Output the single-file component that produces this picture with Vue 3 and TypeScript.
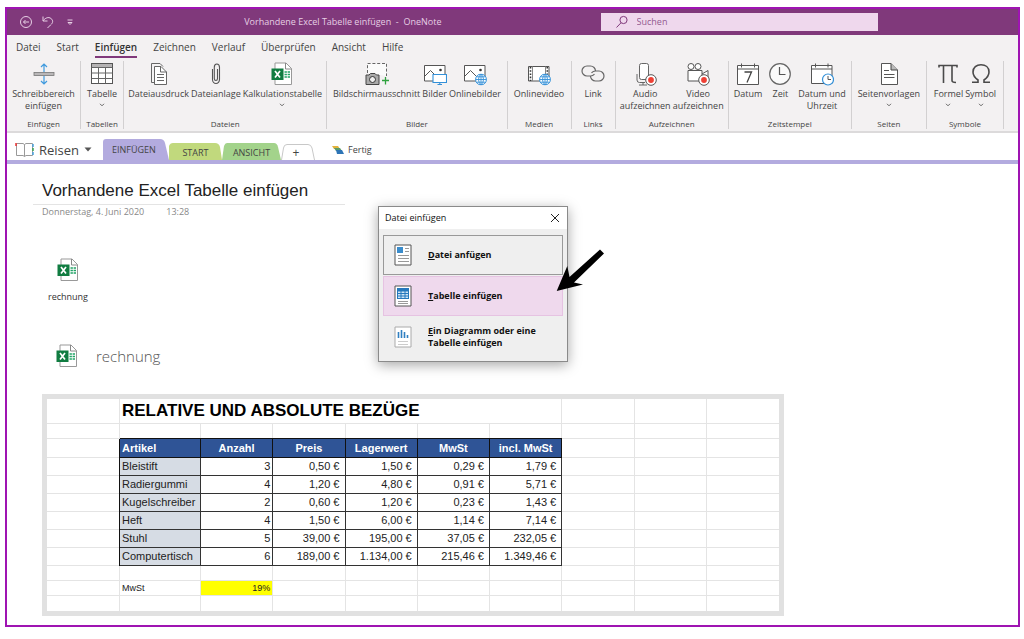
<script setup lang="ts">
import { ref } from 'vue'

interface Tool {
  icon: string
  lines: string[]
  menu?: boolean
}
interface Group {
  name: string
  spread?: boolean
  tools: Tool[]
}

const menus = ['Datei', 'Start', 'Einfügen', 'Zeichnen', 'Verlauf', 'Überprüfen', 'Ansicht', 'Hilfe']
const activeMenu = ref('Einfügen')
const query = ref('')

const groups: Group[] = [
  { name: 'Einfügen', tools: [{ icon: 'space', lines: ['Schreibbereich', 'einfügen'] }] },
  { name: 'Tabellen', tools: [{ icon: 'table', lines: ['Tabelle'], menu: true }] },
  {
    name: 'Dateien',
    tools: [
      { icon: 'printout', lines: ['Dateiausdruck'] },
      { icon: 'clip', lines: ['Dateianlage'] },
      { icon: 'excel', lines: ['Kalkulationstabelle'], menu: true },
    ],
  },
  {
    name: 'Bilder',
    tools: [
      { icon: 'screenshot', lines: ['Bildschirmausschnitt'] },
      { icon: 'picture', lines: ['Bilder'] },
      { icon: 'webpicture', lines: ['Onlinebilder'] },
    ],
  },
  { name: 'Medien', tools: [{ icon: 'webvideo', lines: ['Onlinevideo'] }] },
  { name: 'Links', tools: [{ icon: 'link', lines: ['Link'] }] },
  {
    name: 'Aufzeichnen',
    tools: [
      { icon: 'audio', lines: ['Audio', 'aufzeichnen'] },
      { icon: 'video', lines: ['Video', 'aufzeichnen'] },
    ],
  },
  {
    name: 'Zeitstempel',
    spread: true,
    tools: [
      { icon: 'date', lines: ['Datum'] },
      { icon: 'clock', lines: ['Zeit'] },
      { icon: 'datetime', lines: ['Datum und', 'Uhrzeit'] },
    ],
  },
  { name: 'Seiten', tools: [{ icon: 'template', lines: ['Seitenvorlagen'], menu: true }] },
  {
    name: 'Symbole',
    tools: [
      { icon: 'pi', lines: ['Formel'], menu: true },
      { icon: 'omega', lines: ['Symbol'], menu: true },
    ],
  },
]

const columns = ['Artikel', 'Anzahl', 'Preis', 'Lagerwert', 'MwSt', 'incl. MwSt']
const rows = [
  ['Bleistift', '3', '0,50 €', '1,50 €', '0,29 €', '1,79 €'],
  ['Radiergummi', '4', '1,20 €', '4,80 €', '0,91 €', '5,71 €'],
  ['Kugelschreiber', '2', '0,60 €', '1,20 €', '0,23 €', '1,43 €'],
  ['Heft', '4', '1,50 €', '6,00 €', '1,14 €', '7,14 €'],
  ['Stuhl', '5', '39,00 €', '195,00 €', '37,05 €', '232,05 €'],
  ['Computertisch', '6', '189,00 €', '1.134,00 €', '215,46 €', '1.349,46 €'],
]
</script>

<template>
  <svg class="sprite" aria-hidden="true">
    <symbol id="i-globe" viewBox="0 0 12 12">
      <circle cx="6" cy="6" r="5.4" fill="#fff" stroke="#3390d8" />
      <path d="M.6 6H11.4M1.6 3.3H10.4M1.6 8.7H10.4M6 .6V11.4M6 .6C2.8 3.5 2.8 8.5 6 11.4M6 .6C9.2 3.5 9.2 8.5 6 11.4" fill="none" stroke="#3390d8" stroke-width=".9" />
    </symbol>
    <symbol id="i-space" viewBox="0 0 24 24">
      <rect x="2" y="10.5" width="20" height="3" fill="#b9b7b8" stroke="#777" stroke-width=".8" />
      <path d="M12 10V2M9 5l3-3 3 3M12 14v8M9 19l3 3 3-3" fill="none" stroke="#3f9ade" stroke-width="1.2" />
    </symbol>
    <symbol id="i-table" viewBox="0 0 24 24">
      <rect x="1.500" y="1.500" width="21" height="20" fill="#fff" stroke="#555" />
      <rect x="2" y="2" width="20" height="3" fill="#b5b3b4" />
      <path d="M1.500 5.500H22.500M1.500 11H22.500M1.500 16.500H22.500M8.500 5V21.500M15.500 5V21.500" stroke="#666" fill="none" />
    </symbol>
    <symbol id="i-printout" viewBox="0 0 24 24">
      <path d="M4.500 1.500H13L16 4.500M4.500 1.500V20.500H7.500" fill="#f6f5f5" stroke="#666" />
      <path d="M7.500 4.500H14L19.500 10V22.500H7.500Z" fill="#fff" stroke="#666" />
      <path d="M13.500 4.500V10H19.500M10 12.500H17M10 15.500H17M10 18.500H17" fill="none" stroke="#666" />
    </symbol>
    <symbol id="i-clip" viewBox="0 0 24 24">
      <path d="M8.500 7V17.500a3.500 4 0 0 0 7 0V5.200a2.600 3.200 0 0 0-5.200 0V16.500a1.600 2 0 0 0 3.200 0V7" fill="none" stroke="#555" stroke-width="1.100" />
    </symbol>
    <symbol id="i-excel" viewBox="0 0 24 24">
      <path d="M5 1H16L21.500 6.500V22.500H5Z" fill="#fff" stroke="#999" />
      <path d="M15.500 1V7H21.500" fill="none" stroke="#888" />
      <path d="M14.500 10H20M14.500 12.500H20M14.500 15H20" stroke="#21a366" stroke-width="1.600" stroke-dasharray="2.400 .7" />
      <rect x="1.500" y="6.500" width="12" height="11.500" fill="#107c41" />
      <path d="M5 9L10 15.500M10 9L5 15.500" stroke="#fff" stroke-width="1.700" />
    </symbol>
    <symbol id="i-screenshot" viewBox="0 0 24 24">
      <path d="M2.500 11V1.500H21.500V14" fill="#fbfbfb" stroke="#666" stroke-dasharray="3 1.800" />
      <path d="M1 13H4L5.500 11.500H10L11.500 13H14V22.500H1Z" fill="#aaa" stroke="#444" />
      <circle cx="7.500" cy="17.500" r="3" fill="#eee" stroke="#333" />
      <path d="M17 18.500H24M20.500 15V22.500" stroke="#2fa23f" stroke-width="1.300" />
    </symbol>
    <symbol id="i-picture" viewBox="0 0 24 24">
      <path d="M1.500 3.500H22V19H1.500Z" fill="#fff" stroke="#555" />
      <path d="M2 14L7.500 8.500L13 14" fill="none" stroke="#555" />
      <circle cx="17.500" cy="8" r="1.300" fill="#333" />
      <path d="M10 12.500H23.500V20.500H10ZM14.500 22.500H19M16.800 20.500V22.500" fill="#fff" stroke="#3390d8" stroke-width="1.100" />
    </symbol>
    <symbol id="i-webpicture" viewBox="0 0 24 24">
      <path d="M1.500 3.500H22V19H1.500Z" fill="#fff" stroke="#555" />
      <path d="M2 14L7.500 8.500L14 15" fill="none" stroke="#555" />
      <circle cx="17.500" cy="8" r="1.300" fill="#333" />
      <use href="#i-globe" x="12" y="11.500" width="12" height="12" />
    </symbol>
    <symbol id="i-webvideo" viewBox="0 0 24 24">
      <path d="M1.500 4.500H22V19H1.500Z" fill="#fff" stroke="#555" />
      <path d="M5.500 4.500V19M18.500 4.500V19" stroke="#888" />
      <path d="M3.500 5V19M20.300 5V19" stroke="#333" stroke-width="1.600" stroke-dasharray="1.600 1.600" />
      <use href="#i-globe" x="12" y="11.500" width="12" height="12" />
    </symbol>
    <symbol id="i-link" viewBox="0 0 24 24">
      <path d="M13.500 12.200C12.500 13.300 11 14 9.500 14H6A5 5 0 0 1 6 4H9.500A5 5 0 0 1 14.500 9" fill="none" stroke="#666" stroke-width="1.200" />
      <path d="M10.500 10.800C11.500 9.700 13 9 14.500 9H18A5 5 0 0 1 18 19H14.500A5 5 0 0 1 9.500 14" fill="none" stroke="#666" stroke-width="1.200" />
    </symbol>
    <symbol id="i-rec" viewBox="0 0 12 12">
      <circle cx="6" cy="6" r="5.300" fill="#fff" stroke="#555" />
      <circle cx="6" cy="6" r="2.900" fill="#ee4035" />
    </symbol>
    <symbol id="i-audio" viewBox="0 0 24 24">
      <rect x="6.500" y="1.500" width="9" height="16" rx="2" fill="#fff" stroke="#666" />
      <path d="M4 12V18a2.500 2.500 0 0 0 2.500 2.500H12M10 20.500V23M6 23H14" fill="none" stroke="#666" />
      <use href="#i-rec" x="12" y="12" width="12" height="12" />
    </symbol>
    <symbol id="i-video" viewBox="0 0 24 24">
      <circle cx="5" cy="4.500" r="3" fill="#fff" stroke="#555" />
      <circle cx="12" cy="4.500" r="3" fill="#fff" stroke="#555" />
      <path d="M2 8.500H16V19H2ZM16 12L22 8.500V15" fill="#fff" stroke="#555" />
      <use href="#i-rec" x="12" y="12" width="12" height="12" />
    </symbol>
    <symbol id="i-date" viewBox="0 0 24 24">
      <path d="M1.500 3.500H22.500V22.500H1.500ZM1.500 7H22.500" fill="#fff" stroke="#555" />
      <path d="M5.500 1.500V5.500M18.500 1.500V5.500" stroke="#555" />
      <path d="M8.500 10H15.500L11 20.500" fill="none" stroke="#444" stroke-width="1.300" />
    </symbol>
    <symbol id="i-clock" viewBox="0 0 24 24">
      <circle cx="12" cy="12" r="10.300" fill="#fafafa" stroke="#666" stroke-width="1.200" />
      <path d="M11.500 5V12.500H17.500" fill="none" stroke="#555" stroke-width="1.200" />
    </symbol>
    <symbol id="i-datetime" viewBox="0 0 24 24">
      <path d="M1.500 3.500H22V21.500H1.500ZM1.500 7H22" fill="#fff" stroke="#555" />
      <path d="M5.500 1.500V5.500M18 1.500V5.500" stroke="#555" />
      <circle cx="18" cy="17.500" r="5.500" fill="#fff" stroke="#3390d8" stroke-width="1.200" />
      <path d="M18 14V17.500H21" fill="none" stroke="#555" />
    </symbol>
    <symbol id="i-template" viewBox="0 0 24 24">
      <path d="M4.500 1.500H14L20.500 8V22.500H4.500Z" fill="#fff" stroke="#555" />
      <path d="M14 1.500V8H20.500" fill="#bbb" stroke="#444" />
      <path d="M7 8.500H12M7 12.500H17.500M7 15.500H17.500" stroke="#555" />
    </symbol>
    <symbol id="i-pi" viewBox="0 0 24 24">
      <path d="M3 5.500V3.500H21V5.500M7.500 3.500V21M16 3.500V18.500Q16 20.500 20 20.500" fill="none" stroke="#4a4a4a" stroke-width="1.600" />
    </symbol>
    <symbol id="i-omega" viewBox="0 0 24 24">
      <path d="M3 20.300H9V18C5.500 15.500 4 13 4 10C4 5.500 7.500 2.800 12 2.800S20 5.500 20 10C20 13 18.500 15.500 15 18V20.300H21" fill="none" stroke="#4a4a4a" stroke-width="1.600" />
    </symbol>
  </svg>

  <div class="frame">
    <header class="titlebar">
      <div class="quick">
        <button type="button" aria-label="Zurück">
          <svg width="14" height="14" viewBox="0 0 14 14"><circle cx="7" cy="7" r="5.500" /><path d="M10 7H4.500M6.500 5L4.500 7l2 2" /></svg>
        </button>
        <button type="button" aria-label="Rückgängig">
          <svg width="14" height="14" viewBox="0 0 14 14"><path d="M2 1.500V6H6.500M2.200 5.800C4 3 7.500 1.500 10 3.500C12.500 5.500 12 8 9.500 10L6.500 13" /></svg>
        </button>
        <button type="button" aria-label="Symbolleiste anpassen">
          <svg width="14" height="14" viewBox="0 0 14 14"><path d="M4.500 5H9.500M5 7.500H9L7 9.500Z" /></svg>
        </button>
      </div>
      <span class="doc">Vorhandene Excel Tabelle einfügen &nbsp;-&nbsp; OneNote</span>
      <label class="search">
        <svg width="14" height="14" viewBox="0 0 14 14"><circle cx="8.500" cy="5" r="3.600" /><path d="M6 7.800L1.500 12.500" /></svg>
        <input v-model="query" type="text" placeholder="Suchen" aria-label="Suchen" />
      </label>
    </header>

    <nav class="menus">
      <button v-for="m in menus" :key="m" type="button" :class="{ active: m === activeMenu }" @click="activeMenu = m">{{ m }}</button>
    </nav>

    <section class="ribbon">
      <div v-for="g in groups" :key="g.name" class="group">
        <div class="tools" :class="{ spread: g.spread }">
          <button v-for="t in g.tools" :key="t.icon" type="button" class="tool">
            <svg class="icon"><use :href="'#i-' + t.icon" /></svg>
            <span v-for="l in t.lines" :key="l">{{ l }}</span>
            <svg v-if="t.menu" class="chev" viewBox="0 0 6 4"><path d="M1 .8L3 2.800L5 .8" /></svg>
          </button>
        </div>
        <div class="group-name">{{ g.name }}</div>
      </div>
    </section>

    <nav class="sections">
      <button type="button" class="notebook">
        <svg width="19" height="15" viewBox="0 0 19 15">
          <path d="M1.500 1.500H8L9.500 2.500L11 1.500H17.500V13.500H11L9.500 14.500L8 13.500H1.500ZM9.500 2.500V14.500" fill="#fff" stroke="#999" />
          <path d="M1 1V4" stroke="#e33" stroke-width="1.500" /><path d="M18 2V5" stroke="#4aa3df" stroke-width="1.500" /><path d="M18 6V9" stroke="#3aa655" stroke-width="1.500" /><path d="M18 10V13" stroke="#4aa3df" stroke-width="1.500" />
        </svg>
        <span>Reisen</span>
        <svg width="8" height="5" viewBox="0 0 8 5"><path d="M.5 .5H7.500L4 4.500Z" fill="#555" /></svg>
      </button>
      <button type="button" class="tab current">
        <svg viewBox="0 0 66 21" preserveAspectRatio="none"><path d="M0 21V3Q0 0 3 0H57Q61 0 62 4L66 21Z" fill="#b3abdf" /></svg>
        <span>EINFÜGEN</span>
      </button>
      <button type="button" class="tab">
        <svg viewBox="0 0 53 17" preserveAspectRatio="none"><path d="M0 17V3Q1 0 4 0H46Q50 0 51 4L53 17Z" fill="#c1d97d" /></svg>
        <span>START</span>
      </button>
      <button type="button" class="tab">
        <svg viewBox="0 0 59 17" preserveAspectRatio="none"><path d="M0 17L2 3Q3 0 5 0H52Q55 0 56 4L59 17Z" fill="#a3d38b" /></svg>
        <span>ANSICHT</span>
      </button>
      <button type="button" class="tab add" aria-label="Neuer Abschnitt">
        <svg viewBox="0 0 34 16" preserveAspectRatio="none"><path d="M.5 16L2.500 4Q3 .5 6 .5H27Q30 .5 31 4L33.500 16" fill="#fff" stroke="#c8c8c8" /></svg>
        <span>+</span>
      </button>
      <button type="button" class="done">
        <svg width="12" height="10" viewBox="0 0 12 10"><path d="M0 1H6L8 4H2Z" fill="#e2b33c" /><path d="M2 3H8L10 6H4Z" fill="#5a9b6a" /><path d="M4 5H10L12 9H5Z" fill="#2e75b6" /></svg>
        <span>Fertig</span>
      </button>
    </nav>

    <main class="page">
      <h1>Vorhandene Excel Tabelle einfügen</h1>
      <p class="stamp"><span>Donnerstag, 4. Juni 2020</span><span>13:28</span></p>

      <a href="#rechnung" class="file">
        <svg class="icon"><use href="#i-excel" /></svg>
        <span>rechnung</span>
      </a>
      <a href="#rechnung" class="file-line">
        <svg class="icon"><use href="#i-excel" /></svg>
        <span>rechnung</span>
      </a>

      <table id="rechnung" class="sheet">
        <colgroup>
          <col class="lead" /><col class="item" /><col v-for="n in 8" :key="n" />
        </colgroup>
        <tbody>
          <tr class="heading">
            <td></td>
            <th colspan="6" scope="colgroup">RELATIVE UND ABSOLUTE BEZÜGE</th>
            <td v-for="n in 3" :key="n"></td>
          </tr>
          <tr class="blank"><td v-for="n in 10" :key="n"></td></tr>
          <tr class="head">
            <td></td>
            <th v-for="c in columns" :key="c" scope="col">{{ c }}</th>
            <td v-for="n in 3" :key="n"></td>
          </tr>
          <tr v-for="r in rows" :key="r[0]" class="data">
            <td></td>
            <td v-for="(v, i) in r" :key="i" class="cell" :class="{ name: i === 0, money: i > 1 }">{{ v }}</td>
            <td v-for="n in 3" :key="n"></td>
          </tr>
          <tr class="blank"><td v-for="n in 10" :key="n"></td></tr>
          <tr class="blank">
            <td></td>
            <td>MwSt</td>
            <td class="rate">19%</td>
            <td v-for="n in 7" :key="n"></td>
          </tr>
          <tr class="blank"><td v-for="n in 10" :key="n"></td></tr>
        </tbody>
      </table>

      <div class="dialog" role="dialog" aria-labelledby="dialog-title">
        <div class="dialog-bar">
          <span id="dialog-title">Datei einfügen</span>
          <button type="button" aria-label="Schließen">
            <svg width="10" height="10" viewBox="0 0 10 10"><path d="M1 1L9 9M9 1L1 9" stroke="#222" fill="none" /></svg>
          </button>
        </div>
        <div class="options">
          <button type="button" class="option focused">
            <svg width="18" height="22" viewBox="0 0 18 22"><path d="M1 1H17V21H1Z" fill="#fff" stroke="#555" /><rect x="3" y="3" width="6" height="6" fill="#3a8ccc" /><path d="M11 4.500H15M11 7.500H15M4 11.500H15M4 14.500H15M4 17.500H15" stroke="#999" /></svg>
            <span><u>D</u>atei anfügen</span>
          </button>
          <button type="button" class="option chosen">
            <svg width="18" height="22" viewBox="0 0 18 22"><path d="M1 1H17V21H1Z" fill="#fff" stroke="#555" /><rect x="3.500" y="3.500" width="11" height="10" fill="#cfe5f6" stroke="#2779bd" /><path d="M3 5H15" stroke="#2779bd" stroke-width="3" /><path d="M3 8.500H15M3 11H15M7 4V14M11 4V14" stroke="#2779bd" /><path d="M4 16.500H14M4 18.500H14" stroke="#999" /></svg>
            <span><u>T</u>abelle einfügen</span>
          </button>
          <button type="button" class="option">
            <svg width="18" height="22" viewBox="0 0 18 22"><path d="M1 1H17V21H1Z" fill="#fff" stroke="#aaa" /><path d="M4.500 6V12M7.500 4V12M10.500 6V12M13.500 9V12" stroke="#2f7fc1" stroke-width="1.600" /><path d="M4 15.500H14M4 18.500H14" stroke="#ccc" /></svg>
            <span><u>E</u>in Diagramm oder eine<br />Tabelle einfügen</span>
          </button>
        </div>
      </div>
      <svg class="arrow" width="50" height="44" viewBox="0 0 50 44" aria-hidden="true">
        <path d="M.7 42L11.300 17L13.500 28L44 .5L48 4.500L18 33.500L27 35.500Z" fill="#000" />
      </svg>
    </main>
  </div>
</template>

<style>
body {
  margin: 0;
  background: #fff;
}
</style>

<style scoped>
.sprite {
  position: absolute;
  width: 0;
  height: 0;
}
.frame {
  margin: 7px 4px 13px 5px;
  border: 2px solid #9f14b2;
  background: #fff;
  font: 9px/12px "Open Sans", "Noto Sans", sans-serif;
  color: #444;
}
button {
  margin: 0;
  padding: 0;
  border: 0;
  background: none;
  font: inherit;
  color: inherit;
  white-space: nowrap;
}
.titlebar {
  display: grid;
  grid-template-columns: 237fr 356fr 277fr 140fr;
  align-items: center;
  height: 26px;
  background: #80397b;
  color: #e6cfe4;
}
.quick {
  display: flex;
  gap: 8px;
  padding-left: 12px;
}
.quick button {
  display: flex;
}
.titlebar svg {
  fill: none;
  stroke: #e6cfe4;
}
.doc {
  white-space: nowrap;
}
.search {
  display: flex;
  align-items: center;
  gap: 8px;
  height: 18px;
  padding-left: 14px;
  background: #efd8ed;
}
.titlebar .search svg {
  flex: none;
  stroke: #80397b;
}
.search input {
  flex: 1;
  min-width: 0;
  padding: 0;
  border: 0;
  outline: 0;
  background: none;
  font: inherit;
  color: #80397b;
}
.search input::placeholder {
  color: #935a90;
  opacity: 1;
}
.menus {
  display: flex;
  gap: 16px;
  padding: 4px 9px 0;
  height: 20px;
  background: #f3f1f2;
  font-size: 10px;
  line-height: 15px;
}
.menus button {
  height: 19px;
  border-bottom: 2px solid transparent;
}
.menus .active {
  border-color: #80397b;
  font-weight: 600;
  color: #333;
}
.ribbon {
  display: grid;
  grid-template-columns: 74fr 43fr 203fr 180fr 64fr 44fr 113fr 123fr 75fr 77fr;
  padding: 2px 14px 2px 0;
  border-bottom: 2px solid #dcdadb;
  background: #f3f1f2;
}
.group {
  display: flex;
  flex-direction: column;
  justify-content: space-between;
  min-width: 0;
  height: 68px;
  border-right: 1px solid #d2d0d1;
}
.tools {
  display: flex;
  justify-content: center;
  align-items: flex-start;
  gap: 2px;
}
.tools.spread {
  gap: 6px;
}
.tool {
  display: flex;
  flex-direction: column;
  align-items: center;
  padding-top: 1px;
}
.icon {
  width: 24px;
  height: 24px;
  margin-bottom: 2px;
}
.chev {
  width: 6px;
  height: 4px;
  margin-top: 3px;
  fill: none;
  stroke: #666;
}
.group-name {
  font-size: 8px;
  line-height: 10px;
  text-align: center;
}
.sections {
  display: flex;
  align-items: flex-end;
  height: 27px;
  border-bottom: 4px solid #b3abdf;
}
.notebook {
  display: flex;
  align-items: center;
  gap: 5px;
  width: 96px;
  height: 21px;
  padding-left: 8px;
  font-size: 13px;
}
.tab {
  position: relative;
  width: 53px;
  height: 17px;
  padding-top: 2px;
}
.tab svg {
  position: absolute;
  inset: 0;
  width: 100%;
  height: 100%;
}
.tab span {
  position: relative;
}
.tab.current {
  width: 66px;
  height: 21px;
  padding-top: 0;
  padding-right: 4px;
}
.tab:nth-child(4) {
  width: 59px;
}
.tab.add {
  width: 34px;
  height: 16px;
  padding-right: 4px;
  font-size: 12px;
}
.done {
  display: flex;
  align-items: center;
  gap: 4px;
  height: 20px;
  margin-left: 17px;
}
.page {
  position: relative;
  padding: 15px 35px 9px;
}
h1 {
  width: 303px;
  margin: 0 0 0 -9px;
  padding: 0 0 2px 9px;
  border-bottom: 1px solid #e4e4e4;
  font: 17px/23px "Liberation Sans", Arial, sans-serif;
  color: #222;
  white-space: nowrap;
}
.stamp {
  display: flex;
  gap: 22px;
  margin: 1px 0 40px;
  color: #888;
}
.file {
  display: inline-flex;
  flex-direction: column;
  align-items: center;
  gap: 9px;
  padding: 0 6px;
  color: #333;
  text-decoration: none;
}
.file-line {
  display: flex;
  align-items: center;
  gap: 17px;
  margin: 41px 0 26px 13px;
  color: #555;
  font-size: 15px;
  font-weight: 300;
  text-decoration: none;
}
.file .icon,
.file-line .icon {
  margin: 0;
}
.sheet {
  width: 742px;
  max-width: 100%;
  border: 5px solid #e1e1e1;
  border-collapse: separate;
  border-spacing: 0;
  table-layout: fixed;
  box-sizing: border-box;
  font: 11px/17px "Liberation Sans", Arial, sans-serif;
  color: #222;
}
.sheet .lead {
  width: 73px;
}
.sheet .item {
  width: 81px;
}
.sheet td,
.sheet th {
  box-sizing: border-box;
  padding: 0 2px;
  border-right: 1px solid #e4e4e4;
  border-bottom: 1px solid #e4e4e4;
  white-space: nowrap;
}
.sheet td:last-child {
  border-right: 0;
}
.sheet tr:last-child td {
  border-bottom: 0;
}
.sheet .heading th {
  height: 25px;
  font-size: 17px;
  line-height: 24px;
  text-align: left;
  color: #000;
}
.sheet .blank td {
  height: 15px;
  font-size: 9px;
  line-height: 14px;
}
.sheet .head th {
  height: 19px;
  border-color: #111;
  background: #2f5496;
  box-shadow: 0 -1px #111;
  color: #fff;
}
.sheet .head th:nth-child(2) {
  box-shadow: -1px 0 #111, 0 -1px #111;
  text-align: left;
}
.sheet .data td {
  height: 18px;
}
.sheet .data .cell {
  border-color: #333;
  text-align: right;
}
.sheet .data .name {
  background: #d6dce4;
  box-shadow: -1px 0 #111;
  text-align: left;
}
.sheet .data .money {
  padding-right: 5px;
}
.sheet .rate {
  background: #ff0;
  text-align: right;
}
.dialog {
  position: absolute;
  top: 42px;
  left: 371px;
  box-sizing: border-box;
  width: 190px;
  border: 1px solid #8a8a8a;
  background: #efefef;
  box-shadow: 0 3px 12px rgba(0, 0, 0, 0.35);
  color: #111;
}
.dialog-bar {
  display: flex;
  justify-content: space-between;
  align-items: center;
  height: 22px;
  padding: 0 7px 0 6px;
  background: #fff;
}
.dialog-bar button {
  display: flex;
}
.options {
  display: flex;
  flex-direction: column;
  gap: 1px;
  padding: 6px 4px 4px;
}
.option {
  display: flex;
  align-items: center;
  gap: 16px;
  height: 40px;
  padding-left: 10px;
  border: 1px solid transparent;
  font-weight: 700;
  text-align: left;
}
.option.focused {
  border-color: #999;
}
.option.chosen {
  border-color: #e6c3e2;
  background: #efd9ed;
}
.arrow {
  position: absolute;
  top: 85px;
  left: 549px;
}
</style>
